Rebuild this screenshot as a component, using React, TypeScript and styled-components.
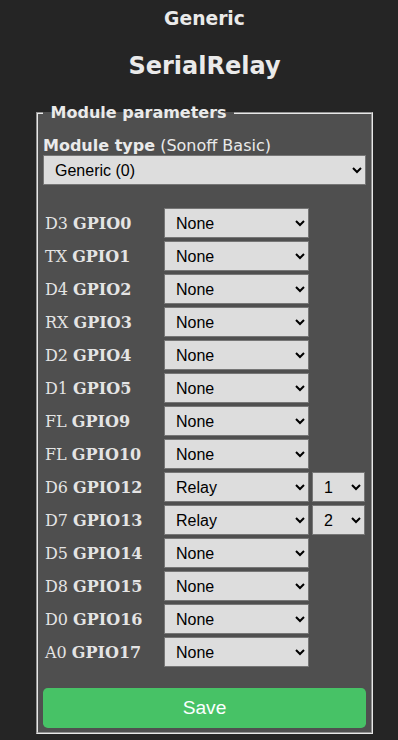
import React from "react";
import styled, { createGlobalStyle } from "styled-components";

const GlobalStyle = createGlobalStyle`
  html, body {
    background: #252525;
    overflow: hidden;
  }
  body {
    margin: 8px;
    font-family: "DejaVu Sans", Verdana, sans-serif;
    color: #eaeaea;
  }
`;

const Page = styled.div`
  padding-left: 11px;
  text-align: center;
`;

const Header = styled.div`
  color: #eaeaea;
`;

const ModuleName = styled.h3`
  font-size: 18.72px;
  margin: 0 0 23px;
`;

const DeviceName = styled.h2`
  font-size: 24px;
  margin: 0 0 23px;
`;

const Container = styled.div`
  display: inline-block;
  text-align: left;
  width: 341px;
`;

const Fieldset = styled.fieldset`
  margin: 0 2px;
  padding: 0 5px 4px;
  background: #4f4f4f;
  border: 2px groove #e8e8e8;
`;

const Legend = styled.legend`
  padding: 0 2px;
  font-weight: bold;
  font-size: 16px;
`;

const TypeLabel = styled.div`
  margin-top: 14px;
  font-size: 16px;
`;

const Select = styled.select`
  box-sizing: border-box;
  width: 100%;
  height: 30px;
  padding: 4px 4px 4px 7px;
  font-family: "Liberation Sans", Arial, sans-serif;
  font-size: 16px;
  color: #000;
  background: #dddddd;
  border: 1px solid #767676;
  border-radius: 0;
`;

const PinTable = styled.div`
  margin-top: 23px;
  display: grid;
  grid-template-columns: 118px 145px 53px;
  column-gap: 3px;
  row-gap: 3px;
  align-items: center;
`;

const PinLabel = styled.div`
  padding-left: 2px;
  font-family: "DejaVu Serif", serif;
  font-size: 16px;
  color: #e4e4e4;
`;

const SaveButton = styled.button`
  display: block;
  width: 100%;
  margin-top: 21px;
  border: 0;
  border-radius: 0.3rem;
  background: #47c266;
  color: #faffff;
  font-family: "Liberation Sans", Arial, sans-serif;
  font-size: 1.2rem;
  line-height: 2.5rem;
  padding: 0;
`;

const pins: [string, string, string, string?][] = [
  ["D3", "GPIO0", "None"],
  ["TX", "GPIO1", "None"],
  ["D4", "GPIO2", "None"],
  ["RX", "GPIO3", "None"],
  ["D2", "GPIO4", "None"],
  ["D1", "GPIO5", "None"],
  ["FL", "GPIO9", "None"],
  ["FL", "GPIO10", "None"],
  ["D6", "GPIO12", "Relay", "1"],
  ["D7", "GPIO13", "Relay", "2"],
  ["D5", "GPIO14", "None"],
  ["D8", "GPIO15", "None"],
  ["D0", "GPIO16", "None"],
  ["A0", "GPIO17", "None"],
];

export default function App() {
  return (
    <Page>
      <GlobalStyle />
      <Header>
        <ModuleName>Generic</ModuleName>
        <DeviceName>SerialRelay</DeviceName>
      </Header>
      <Container>
        <Fieldset>
          <Legend>&nbsp;Module parameters&nbsp;</Legend>
          <TypeLabel>
            <b>Module type</b> (Sonoff Basic)
          </TypeLabel>
          <Select defaultValue="0">
            <option value="0">Generic (0)</option>
          </Select>
          <PinTable>
            {pins.map(([alias, gpio, fn, idx]) => (
              <React.Fragment key={gpio}>
                <PinLabel>
                  {alias} <b>{gpio}</b>
                </PinLabel>
                <Select defaultValue={fn}>
                  <option value={fn}>{fn}</option>
                </Select>
                {idx ? (
                  <Select defaultValue={idx}>
                    <option value={idx}>{idx}</option>
                  </Select>
                ) : (
                  <span />
                )}
              </React.Fragment>
            ))}
          </PinTable>
          <SaveButton>Save</SaveButton>
        </Fieldset>
      </Container>
    </Page>
  );
}
